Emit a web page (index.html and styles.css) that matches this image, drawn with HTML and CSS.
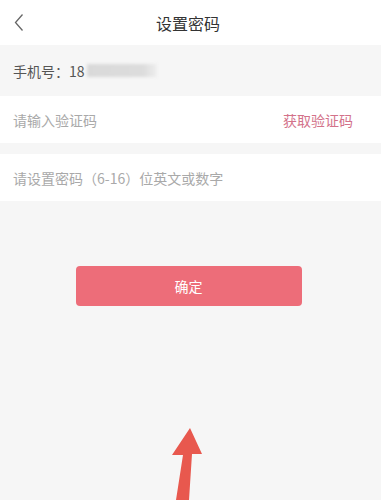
FILE: index.html
```html
<!DOCTYPE html>
<html lang="zh">
<head>
<meta charset="utf-8">
<link rel="stylesheet" href="styles.css">
</head>
<body>
<div class="page">
  <header class="nav">
    <svg class="back" width="10" height="19" viewBox="0 0 10 19"><path d="M8.5 1.5 L1.5 9.5 L8.5 17.5" fill="none" stroke="#666" stroke-width="1.3"/></svg>
    <div class="title">设置密码</div>
  </header>
  <div class="row phone">
    <span>手机号：18</span><span class="blur"></span>
  </div>
  <div class="row white code">
    <span class="ph">请输入验证码</span>
    <span class="get">获取验证码</span>
  </div>
  <div class="row white pwd">
    <span class="ph">请设置密码（6-16）位英文或数字</span>
  </div>
  <div class="btn-wrap">
    <div class="btn">确定</div>
  </div>
  <svg class="arrow" width="60" height="80" viewBox="0 0 60 80">
    <path d="M35 8 L47 34 L37 34 L34 80 L21 80 L28 35 L17 35 Z" fill="#e8584e"/>
  </svg>
</div>
</body>
</html>
```
FILE: styles.css
```css
html, body { margin: 0; padding: 0; }
body {
  background: #f6f6f6;
  font-family: "Noto Sans CJK SC", "Noto Sans", sans-serif;
  width: 381px;
  height: 500px;
  overflow: hidden;
}
.page { position: relative; height: 500px; }
.nav {
  height: 45px;
  background: #fff;
  display: flex;
  align-items: center;
  justify-content: center;
  position: relative;
  padding-right: 5px;
}
.back { position: absolute; left: 14px; top: 13px; }
.title { font-size: 16px; color: #333; }
.row {
  display: flex;
  align-items: center;
  padding: 0 13px;
  font-size: 14px;
}
.phone { height: 51px; color: #555; }
.blur {
  display: inline-block;
  width: 70px;
  height: 13px;
  margin-left: 2px;
  background: linear-gradient(90deg, #d9d9d9 0%, #dcdcdc 80%, #eeeeee 100%);
  filter: blur(1.5px);
}
.white { background: #fff; }
.code { height: 47px; justify-content: space-between; padding-right: 28px; }
.pwd { height: 47px; margin-top: 11px; }
.ph { color: #a9a9a9; }
.get { color: #d3728a; }
.btn-wrap { display: flex; justify-content: center; padding-top: 65px; padding-right: 4px; }
.btn {
  width: 226px;
  height: 40px;
  background: #ed6d79;
  border-radius: 4px;
  color: #fff;
  font-size: 14px;
  display: flex;
  align-items: center;
  justify-content: center;
}
.arrow { position: absolute; left: 155px; top: 420px; }
```
